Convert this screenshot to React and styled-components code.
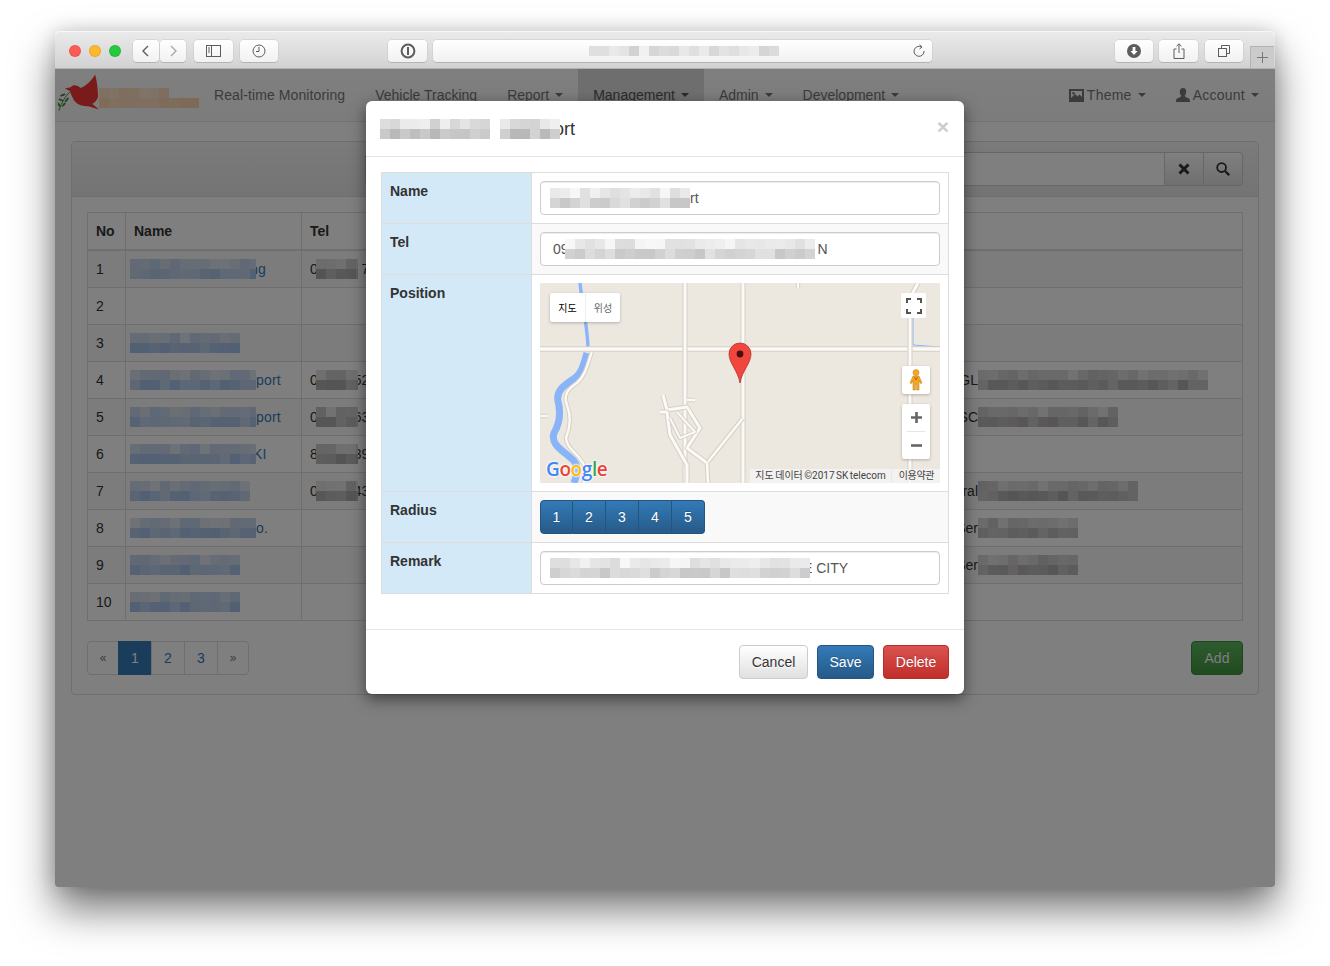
import styled, { createGlobalStyle } from "styled-components";

const GlobalStyle = createGlobalStyle`
  html, body {
    margin: 0;
    padding: 0;
    height: 100%;
    background: #fff;
    overflow: hidden;
  }
  body {
    font-family: "Liberation Sans", Arial, sans-serif;
    font-size: 14px;
    line-height: 20px;
    color: #333;
  }
  * { box-sizing: border-box; }
`;

const noise = (a, b) => {
  const x = Math.sin(a * 12.9898 + b * 78.233) * 43758.5453;
  return x - Math.floor(x);
};

const TONES = {
  gray: [[244, 244, 244], [180, 180, 180]],
  soft: [[250, 250, 250], [196, 196, 196]],
  blue: [[226, 230, 236], [160, 190, 232]],
  dark: [[232, 232, 232], [168, 164, 164]],
  peach: [[255, 236, 218], [255, 208, 166]],
};

// pixelated patch that hides a piece of text in the screenshot
const Mosaic = ({ cols, rows = 2, tone = "gray", seed = 1, first, ...rest }) => {
  const [light, dark] = TONES[tone];
  const cells = [];
  for (let r = 0; r < rows; r++) {
    const count = r === 0 && first ? first : cols;
    for (let c = 0; c < cols; c++) {
      const base = r === 0 ? 0.05 : 0.45;
      const t = base + noise(c + seed * 7, r + seed) * 0.5;
      const mix = light.map((v, i) => Math.round(v + (dark[i] - v) * t));
      cells.push(
        <MosaicCell
          key={`${r}-${c}`}
          style={{ background: c < count ? `rgb(${mix.join(",")})` : "transparent" }}
        />
      );
    }
  }
  return (
    <MosaicGrid $cols={cols} {...rest}>
      {cells}
    </MosaicGrid>
  );
};

const MosaicGrid = styled.span`
  display: inline-grid;
  grid-template-columns: repeat(${(p) => p.$cols}, 10px);
  grid-auto-rows: 10px;
  flex: none;
  position: relative;
  z-index: 1;
  overflow: hidden;
  ${(p) => p.$width && `width: ${p.$width}px;`}
  margin-left: ${(p) => p.$before || 0}px;
  margin-right: ${(p) => p.$after || 0}px;
`;

const MosaicCell = styled.span`
  display: block;
`;

/* ---------- browser chrome ---------- */

const Window = styled.div`
  width: 1220px;
  height: 856px;
  margin: 31px 0 0 55px;
  border-radius: 5px 5px 3px 3px;
  box-shadow: 0 22px 42px rgba(0, 0, 0, 0.55), 0 0 18px rgba(0, 0, 0, 0.16);
  display: flex;
  flex-direction: column;
  overflow: visible;
`;

const Toolbar = styled.div`
  height: 38px;
  flex: none;
  display: flex;
  align-items: flex-start;
  padding: 9px 0 0 14px;
  background: linear-gradient(#ebebeb, #d2d2d2);
  border-radius: 5px 5px 0 0;
  border-bottom: 1px solid #b1b1b1;
  box-shadow: inset 0 1px 0 #f7f7f7;
`;

const Light = styled.span`
  width: 12px;
  height: 12px;
  margin: 5px 8px 0 0;
  border-radius: 50%;
  background: ${(p) => p.$color};
  box-shadow: inset 0 0 0 1px rgba(0, 0, 0, 0.08);
`;

const ToolButton = styled.div`
  width: ${(p) => p.$w}px;
  height: 22px;
  margin-left: ${(p) => p.$gap || 0}px;
  display: flex;
  align-items: center;
  justify-content: center;
  flex: none;
  border-radius: 4px;
  background: linear-gradient(#ffffff, #f1f1f1);
  box-shadow: 0 1px 0 #b4b4b4, 0 0 0 0.5px #c8c8c8;
  color: ${(p) => (p.$off ? "#a8a8a8" : "#5c5c5c")};
`;

const UrlBar = styled(ToolButton)`
  padding-right: 6px;
  position: relative;
`;

const UrlReload = styled.span`
  position: absolute;
  right: 6px;
  top: 4px;
  display: flex;
`;

const NewTab = styled.div`
  width: 24px;
  height: 22px;
  margin: -1px 0 0 7px;
  align-self: flex-end;
  display: flex;
  align-items: center;
  justify-content: center;
  background: #cbcbcb;
  border: 1px solid #b4b4b4;
  border-right: 0;
  border-bottom: 0;
  color: #777;
`;

/* ---------- page behind the dialog ---------- */

const Page = styled.div`
  flex: 1;
  position: relative;
  background: #fff;
  border-radius: 0 0 3px 3px;
  overflow: hidden;
`;

const Navbar = styled.nav`
  height: 53px;
  display: flex;
  background: linear-gradient(#fff, #f8f8f8);
  border-bottom: 1px solid #e7e7e7;
`;

const Brand = styled.div`
  width: 141px;
  margin-left: 3px;
  display: flex;
  align-items: flex-start;
  padding-top: 4px;
  flex: none;
`;

const BrandPatch = styled.span`
  margin-top: 15px;
  display: inline-flex;
`;

const NavItem = styled.div`
  height: 52px;
  padding: 0 ${(p) => (p.$end ? 16 : 15)}px 0 15px;
  display: flex;
  align-items: center;
  color: #777;
  white-space: nowrap;
  letter-spacing: ${(p) => p.$track || 0}px;
  background: ${(p) => (p.$active ? "linear-gradient(#dbdbdb, #e2e2e2)" : "none")};
  margin-left: ${(p) => (p.$push ? "auto" : "0")};
  ${(p) => p.$active && "color: #555;"}
`;

const NavIcon = styled.span`
  display: inline-flex;
  margin-right: 3px;
  color: #777;
`;

const Caret = styled.span`
  width: 0;
  height: 0;
  margin-left: 6px;
  border-top: 4px solid currentColor;
  border-left: 4px solid transparent;
  border-right: 4px solid transparent;
`;

const Panel = styled.section`
  margin: 19px 16px 0;
  height: 554px;
  border: 1px solid #ddd;
  border-radius: 4px;
`;

const PanelHead = styled.div`
  height: 55px;
  padding: 10px 15px;
  display: flex;
  justify-content: flex-end;
  background: linear-gradient(#f5f5f5, #e8e8e8);
  border-bottom: 1px solid #ddd;
  border-radius: 3px 3px 0 0;
`;

const SearchInput = styled.div`
  width: 800px;
  height: 34px;
  background: #fff;
  border: 1px solid #ccc;
  border-radius: 4px 0 0 4px;
`;

const SearchButton = styled.div`
  width: ${(p) => p.$w}px;
  height: 34px;
  margin-left: -1px;
  display: flex;
  align-items: center;
  justify-content: center;
  background: linear-gradient(#fff, #e0e0e0);
  border: 1px solid #ccc;
  border-radius: ${(p) => (p.$last ? "0 4px 4px 0" : "0")};
  color: #333;
`;

const PanelBody = styled.div`
  padding: 15px;
`;

const ListTable = styled.table`
  width: 1155px;
  table-layout: fixed;
  border-collapse: collapse;
  border: 1px solid #ddd;

  th, td {
    border: 1px solid #ddd;
    padding: 8px;
    height: 37px;
    text-align: left;
    line-height: 20px;
    overflow: hidden;
  }
  th {
    border-bottom-width: 2px;
  }
  tbody tr:nth-child(odd) {
    background: #f9f9f9;
  }
`;

const CellLine = styled.div`
  display: flex;
  align-items: center;
  height: 20px;
  white-space: nowrap;
  color: ${(p) => (p.$link ? "#337ab7" : "#333")};
  ${(p) => p.$link && "letter-spacing: 0.2px;"}
`;

const Lead = styled.span`
  width: 22px;
  flex: none;
  text-align: right;
  overflow: hidden;
  direction: rtl;
`;

const ListFooter = styled.div`
  display: flex;
  justify-content: space-between;
  margin-top: 20px;
`;

const Pager = styled.div`
  display: flex;
  height: 34px;
`;

const PagerItem = styled.div`
  width: ${(p) => p.$w}px;
  margin-left: -1px;
  display: flex;
  align-items: center;
  justify-content: center;
  background: ${(p) => (p.$active ? "#337ab7" : "#fff")};
  color: ${(p) => (p.$active ? "#fff" : p.$muted ? "#777" : "#337ab7")};
  border: 1px solid ${(p) => (p.$active ? "#337ab7" : "#ddd")};
  font-size: ${(p) => (p.$muted ? 12 : 14)}px;
  &:first-child {
    margin-left: 0;
    border-radius: 4px 0 0 4px;
  }
  &:last-child {
    border-radius: 0 4px 4px 0;
  }
`;

const GRADIENTS = {
  default: ["#fff", "#e0e0e0", "#ccc", "#333"],
  primary: ["#337ab7", "#265a88", "#245580", "#fff"],
  success: ["#5cb85c", "#419641", "#3e8f3e", "#fff"],
  danger: ["#d9534f", "#c12e2a", "#b92c28", "#fff"],
};

const Button = styled.div`
  width: ${(p) => p.$w}px;
  height: 34px;
  margin-left: ${(p) => p.$gap || 0}px;
  display: flex;
  align-items: center;
  justify-content: center;
  border-radius: 4px;
  background: linear-gradient(${(p) => GRADIENTS[p.$kind][0]}, ${(p) => GRADIENTS[p.$kind][1]});
  border: 1px solid ${(p) => GRADIENTS[p.$kind][2]};
  color: ${(p) => GRADIENTS[p.$kind][3]};
  text-shadow: ${(p) => (p.$kind === "default" ? "0 1px 0 #fff" : "0 -1px 0 rgba(0,0,0,.2)")};
`;

/* ---------- dialog ---------- */

const Backdrop = styled.div`
  position: absolute;
  inset: 0;
  z-index: 5;
  background: rgba(0, 0, 0, 0.5);
  display: flex;
  justify-content: center;
  align-items: flex-start;
`;

const Modal = styled.div`
  width: 598px;
  height: 593px;
  margin-top: 32px;
  background: #fff;
  border-radius: 6px;
  box-shadow: 0 5px 15px rgba(0, 0, 0, 0.5);
  display: flex;
  flex-direction: column;
`;

const ModalHeader = styled.header`
  height: 56px;
  flex: none;
  padding: 0 15px 0 14px;
  display: flex;
  align-items: center;
  justify-content: space-between;
  border-bottom: 1px solid #e5e5e5;
`;

const ModalTitle = styled.h4`
  margin: 0;
  display: flex;
  align-items: center;
  font-size: 18px;
  font-weight: 400;
  line-height: 26px;
`;

const Close = styled.span`
  font-size: 21px;
  font-weight: 700;
  line-height: 1;
  color: #000;
  opacity: 0.2;
  margin: 0 0 4px 0;
`;

const ModalBody = styled.div`
  flex: 1;
  padding: 15px;
`;

const FormTable = styled.table`
  width: 568px;
  table-layout: fixed;
  border-collapse: collapse;
  border: 1px solid #ddd;

  th, td {
    border: 1px solid #ddd;
    padding: 8px;
    vertical-align: top;
  }
  th {
    width: 150px;
    text-align: left;
    font-weight: 700;
    background: #d4e9f7;
  }
`;

const Striped = styled.tr`
  td {
    background: #f9f9f9;
  }
`;

const Field = styled.div`
  width: 400px;
  height: 34px;
  display: flex;
  align-items: center;
  padding: 0 12px 0 9px;
  background: #fff;
  border: 1px solid #ccc;
  border-radius: 4px;
  color: #555;
  white-space: nowrap;
  box-shadow: inset 0 1px 1px rgba(0, 0, 0, 0.075);
`;

const FieldLead = styled.span`
  margin-left: 3px;
`;

const Map = styled.div`
  width: 400px;
  height: 200px;
  position: relative;
  overflow: hidden;
  background: #ece8e0;
  font-family: Roboto, "Noto Sans CJK KR", sans-serif;
`;

const MapCanvas = styled.svg`
  display: block;
`;

const MapTypes = styled.div`
  position: absolute;
  left: 10px;
  top: 10px;
  height: 29px;
  display: flex;
  background: #fff;
  border-radius: 2px;
  box-shadow: 0 1px 3px rgba(0, 0, 0, 0.25);
  font-family: "Noto Sans CJK KR", sans-serif;
  font-size: 10px;
`;

const MapType = styled.span`
  width: 35px;
  display: flex;
  align-items: center;
  justify-content: center;
  color: ${(p) => (p.$on ? "#000" : "#666")};
  ${(p) => !p.$on && "border-left: 1px solid #eee;"}
`;

const MapControl = styled.div`
  position: absolute;
  left: ${(p) => p.$x}px;
  top: ${(p) => p.$y}px;
  width: ${(p) => p.$w}px;
  height: ${(p) => p.$h}px;
  background: #fff;
  border-radius: 2px;
  box-shadow: ${(p) => (p.$flat ? "none" : "0 1px 3px rgba(0, 0, 0, 0.25)")};
  display: flex;
  flex-direction: column;
  align-items: center;
  justify-content: center;
`;

const ZoomStep = styled.span`
  flex: 1;
  width: 18px;
  display: flex;
  align-items: center;
  justify-content: center;
  ${(p) => p.$divided && "border-top: 1px solid #e6e6e6;"}
`;

const GoogleMark = styled.div`
  position: absolute;
  left: 6px;
  bottom: 2px;
  font-family: "Open Sans", sans-serif;
  font-size: 19px;
  line-height: 24px;
  letter-spacing: -0.4px;
  font-weight: 600;
  text-shadow: 0 0 2px #fff, 0 0 2px #fff, 0 0 3px #fff;
`;

const GoogleLetter = styled.span`
  color: ${(p) => p.$color};
`;

const Attribution = styled.div`
  position: absolute;
  right: 0;
  bottom: 0;
  height: 14px;
  display: flex;
  font-size: 10px;
  line-height: 14px;
  color: #444;
`;

const AttributionText = styled.span`
  padding: 0 5px 0 5px;
  background: rgba(245, 245, 245, 0.72);
  white-space: nowrap;
  word-spacing: -1px;
`;

const AttributionTerms = styled(AttributionText)`
  margin-left: 1px;
  padding: 0 6px 0 7px;
  letter-spacing: -0.4px;
`;

const RadiusGroup = styled.div`
  display: inline-flex;
  height: 34px;
`;

const RadiusButton = styled.div`
  width: 33px;
  display: flex;
  align-items: center;
  justify-content: center;
  color: #fff;
  background: linear-gradient(#337ab7, #265a88);
  border: 1px solid #245580;
  border-left-width: 0;
  text-shadow: 0 -1px 0 rgba(0, 0, 0, 0.2);
  &:first-child {
    border-left-width: 1px;
    border-radius: 4px 0 0 4px;
  }
  &:last-child {
    border-radius: 0 4px 4px 0;
  }
`;

const ModalFooter = styled.footer`
  height: 65px;
  flex: none;
  padding: 15px;
  display: flex;
  justify-content: flex-end;
  border-top: 1px solid #e5e5e5;
`;

/* ---------- drawings ---------- */

const Stroke = ({ w = 14, h = 14, vb = "0 0 14 14", sw = 1.2, children }) => (
  <svg width={w} height={h} viewBox={vb} fill="none" stroke="currentColor" strokeWidth={sw}>
    {children}
  </svg>
);

const Dove = () => (
  <svg width="42" height="40" viewBox="0 0 42 40">
    <path
      d="M38 1 C40 8 41 17 41 24 C40 28 37 30 35 31 L42 37 L31 33.5 C25 34 19 32 16 27 C14 23 13 20 12 18 L7 15.5 L13 14 C16 11 20 12 23 15 C28 13 34 8 38 1 Z"
      fill="#f43636"
    />
    <path d="M12 19 C8 23 4 29 1 38" fill="none" stroke="#3f8a3a" strokeWidth="1" />
    <g fill="#3f8a3a">
      <ellipse cx="5" cy="22" rx="3" ry="1.1" transform="rotate(-20 5 22)" />
      <ellipse cx="9" cy="27" rx="3" ry="1.1" transform="rotate(-50 9 27)" />
      <ellipse cx="3" cy="27" rx="2.6" ry="1" transform="rotate(20 3 27)" />
      <ellipse cx="6" cy="32" rx="2.6" ry="1" transform="rotate(-50 6 32)" />
      <ellipse cx="1" cy="32" rx="2.4" ry="1" transform="rotate(60 1 32)" />
    </g>
  </svg>
);

const Road = ({ d, w = 3 }) => (
  <>
    <path d={d} fill="none" stroke="#d6d0c3" strokeWidth={w + 2} strokeLinejoin="round" />
    <path d={d} fill="none" stroke="#fbfaf8" strokeWidth={w} strokeLinejoin="round" />
  </>
);

const MapDrawing = () => (
  <MapCanvas width="400" height="200" viewBox="0 0 400 200">
    <path d="M40 0 C42 20 47 40 48 64" fill="none" stroke="#8ab4f8" strokeWidth="3.4" />
    <path
      d="M47 70 C44 80 42 90 35 95 C24 102 16 108 18 118 C21 130 20 140 14 150 C10 162 24 168 34 178 C40 186 36 194 34 200"
      fill="none"
      stroke="#8ab4f8"
      strokeWidth="7"
    />
    <path d="M378 0 L373 12 L373 62 L400 64" fill="none" stroke="#8ab4f8" strokeWidth="1" />
    <Road d="M52 68 C47 84 45 93 37 100 C28 106 23 112 27 122 C32 135 30 145 26 155 C26 165 38 170 44 182 L44 200" w={2.4} />
    <Road d="M0 66 H400" w={3.6} />
    <Road d="M145 0 V200" w={3} />
    <Road d="M203 0 V200" w={3} />
    <Road d="M378 0 L370 15 V200" w={3} />
    <Road d="M203 135 L167 180 L168 200" w={2.6} />
    <Road d="M123 112 L127 127 L147 124 L160 145 L147 165 L167 180" w={3} />
    <Road d="M120 129 H127 L130 152 L147 182 V200" w={3} />
    <Road d="M137 129 L155 149 L140 155 L130 135" w={2} />
    <Road d="M147 117 H155" w={2.4} />
    <Road d="M258 0 V5" w={2.4} />
    <Road d="M0 133 H7" w={2.4} />
    <path
      d="M200 100 C198 88 189 80 189 71 A11 11 0 1 1 211 71 C211 80 202 88 200 100 Z"
      fill="#f0463e"
      stroke="#b8322a"
      strokeWidth="0.8"
    />
    <circle cx="200" cy="71" r="3.4" fill="#4a0f0c" />
  </MapCanvas>
);

const Pegman = () => (
  <svg width="14" height="22" viewBox="0 0 14 22">
    <circle cx="7" cy="3.6" r="3" fill="#f7a823" stroke="#b9791a" strokeWidth="0.5" />
    <path
      d="M4 7 H10 L13 14 L11.4 14.6 L10 11 V21 H7.6 V15 H6.4 V21 H4 V11 L2.6 14.6 L1 14 Z"
      fill="#f7a823"
      stroke="#b9791a"
      strokeWidth="0.5"
    />
    <path d="M5.5 8 L7 11 L8.5 8" fill="none" stroke="#c43d1c" strokeWidth="0.8" />
  </svg>
);

const NAV = [
  { label: "Real-time Monitoring", track: 0.1 },
  { label: "Vehicle Tracking" },
  { label: "Report", caret: true },
  { label: "Management", caret: true, active: true },
  { label: "Admin", caret: true },
  { label: "Development", caret: true },
];

const ROWS = [
  { name: { cols: 13, text: "ng", after: -6 }, tel: ["0", "\u00a0\u00a07"] },
  {},
  { name: { cols: 11, width: 110 } },
  { name: { cols: 13, text: "port" }, tel: ["0", "52"], addr: { lead: "GL", cols: 23 } },
  { name: { cols: 13, text: "port" }, tel: ["0", "63"], addr: { lead: "SC", cols: 14 } },
  { name: { cols: 13, text: "KI", after: -3 }, tel: ["8", "39"] },
  { name: { cols: 12, width: 120 }, tel: ["0", "43"], addr: { lead: "ral", cols: 16 } },
  { name: { cols: 13, text: "o." }, addr: { lead: "Ser", cols: 10 } },
  { name: { cols: 11, width: 110 }, addr: { lead: "Ser", cols: 10 } },
  { name: { cols: 11, width: 110 } },
];

const App = () => {
  return (
    <>
      <GlobalStyle />
      <Window>
        <Toolbar>
          <Light $color="#fc5b57" />
          <Light $color="#fdb82c" />
          <Light $color="#27c93f" />
          <ToolButton $w={26} $gap={4}>
            <Stroke sw={1.4}><path d="M9 2 L4 7 L9 12" /></Stroke>
          </ToolButton>
          <ToolButton $w={26} $gap={1} $off>
            <Stroke sw={1.4}><path d="M5 2 L10 7 L5 12" /></Stroke>
          </ToolButton>
          <ToolButton $w={39} $gap={8}>
            <Stroke w={15} h={12} vb="0 0 15 12" sw={1}>
              <rect x="0.5" y="0.5" width="14" height="11" />
              <path d="M5.5 0.5 V11.5 M2 3 H4 M2 5 H4 M2 7 H4" />
            </Stroke>
          </ToolButton>
          <ToolButton $w={38} $gap={7}>
            <Stroke sw={1}>
              <circle cx="7" cy="7" r="6" />
              <path d="M7 3 V7.5 H4" />
            </Stroke>
          </ToolButton>
          <ToolButton $w={39} $gap={110}>
            <Stroke w={16} h={16} vb="0 0 16 16" sw={2}>
              <circle cx="8" cy="8" r="6.4" />
              <path d="M8 4 V12" />
            </Stroke>
          </ToolButton>
          <UrlBar $w={499} $gap={6}>
            <Mosaic cols={19} rows={1} tone="gray" seed={4} $before={9} />
            <UrlReload>
              <Stroke sw={1}>
                <path d="M9.5 3 A5 5 0 1 0 12 7" />
                <path d="M7.5 0.8 L10 3 L7.5 5" />
              </Stroke>
            </UrlReload>
          </UrlBar>
          <ToolButton $w={38} $gap={183}>
            <svg width="14" height="14" viewBox="0 0 14 14">
              <circle cx="7" cy="7" r="7" fill="#5c5c5c" />
              <path d="M5.6 3 H8.4 V7 H10.6 L7 11 L3.4 7 H5.6 Z" fill="#fff" />
            </svg>
          </ToolButton>
          <ToolButton $w={39} $gap={6}>
            <Stroke w={12} h={16} vb="0 0 12 16" sw={1}>
              <path d="M3.5 6 H1 V15.5 H11 V6 H8.5 M6 10 V1 M3.5 3.2 L6 0.8 L8.5 3.2" />
            </Stroke>
          </ToolButton>
          <ToolButton $w={38} $gap={7}>
            <Stroke w={12} h={12} vb="0 0 12 12" sw={1}>
              <rect x="0.5" y="3.5" width="8" height="8" />
              <path d="M3.5 3.5 V0.5 H11.5 V8.5 H8.5" />
            </Stroke>
          </ToolButton>
          <NewTab>
            <Stroke w={11} h={11} vb="0 0 11 11" sw={1}>
              <path d="M5.5 0 V11 M0 5.5 H11" />
            </Stroke>
          </NewTab>
        </Toolbar>

        <Page>
          <Navbar>
            <Brand>
              <Dove />
              <BrandPatch>
                <Mosaic cols={10} rows={2} tone="peach" seed={6} first={7} />
              </BrandPatch>
            </Brand>
            {NAV.map((item) => (
              <NavItem key={item.label} $active={item.active} $track={item.track}>
                {item.label}
                {item.caret && <Caret />}
              </NavItem>
            ))}
            <NavItem $push $track={0.25}>
              <NavIcon>
                <svg width="15" height="13" viewBox="0 0 15 13">
                  <path
                    fillRule="evenodd"
                    d="M0 0 H15 V13 H0 Z M2 2 V9 L6 5 L8.5 7.5 L10.5 5.5 L13 8 V2 Z M4.5 3 A1.3 1.3 0 1 0 4.5 5.6 A1.3 1.3 0 1 0 4.5 3 Z"
                    fill="currentColor"
                  />
                </svg>
              </NavIcon>
              Theme
              <Caret />
            </NavItem>
            <NavItem $end $track={0.25}>
              <NavIcon>
                <svg width="14" height="14" viewBox="0 0 14 14">
                  <path
                    d="M7 0 C9.2 0 10.2 1.6 10.2 3.8 C10.2 5.6 9.4 7 8.8 7.8 C8.8 9 10 9.3 12 10 C13.6 10.6 14 11.6 14 14 H0 C0 11.6 0.4 10.6 2 10 C4 9.3 5.2 9 5.2 7.8 C4.6 7 3.8 5.6 3.8 3.8 C3.8 1.6 4.8 0 7 0 Z"
                    fill="currentColor"
                  />
                </svg>
              </NavIcon>
              Account
              <Caret />
            </NavItem>
          </Navbar>

          <Panel>
            <PanelHead>
              <SearchInput />
              <SearchButton $w={40}>
                <Stroke sw={3}><path d="M2.5 2.5 L11.5 11.5 M11.5 2.5 L2.5 11.5" /></Stroke>
              </SearchButton>
              <SearchButton $w={40} $last>
                <Stroke sw={1.8}>
                  <circle cx="5.6" cy="5.6" r="4.4" />
                  <path d="M9 9 L13.2 13.2" strokeWidth="2.4" />
                </Stroke>
              </SearchButton>
            </PanelHead>
            <PanelBody>
              <ListTable>
                <colgroup>
                  <col width="38" />
                  <col width="176" />
                  <col width="299" />
                  <col width="347" />
                  <col width="295" />
                </colgroup>
                <thead>
                  <tr>
                    <th>No</th>
                    <th>Name</th>
                    <th>Tel</th>
                    <th />
                    <th />
                  </tr>
                </thead>
                <tbody>
                  {ROWS.map((row, i) => (
                    <tr key={i}>
                      <td>{i + 1}</td>
                      <td>
                        {row.name && (
                          <CellLine $link>
                            <Mosaic
                              cols={row.name.cols}
                              tone="blue"
                              seed={i + 2}
                              $width={row.name.width || 126}
                              $before={-4}
                              $after={row.name.after}
                            />
                            {row.name.text}
                          </CellLine>
                        )}
                      </td>
                      <td>
                        {row.tel && (
                          <CellLine>
                            {row.tel[0]}
                            <Mosaic cols={5} tone="dark" seed={i + 11} $width={42} $before={-2} $after={-4} />
                            {row.tel[1]}
                          </CellLine>
                        )}
                      </td>
                      <td />
                      <td>
                        {row.addr && (
                          <CellLine>
                            <Lead>{row.addr.lead}</Lead>
                            <Mosaic cols={row.addr.cols} tone="dark" seed={i + 21} />
                          </CellLine>
                        )}
                      </td>
                    </tr>
                  ))}
                </tbody>
              </ListTable>
              <ListFooter>
                <Pager>
                  <PagerItem $w={32} $muted>«</PagerItem>
                  <PagerItem $w={34} $active>1</PagerItem>
                  <PagerItem $w={34}>2</PagerItem>
                  <PagerItem $w={34}>3</PagerItem>
                  <PagerItem $w={32} $muted>»</PagerItem>
                </Pager>
                <Button $kind="success" $w={52}>Add</Button>
              </ListFooter>
            </PanelBody>
          </Panel>

          <Backdrop>
            <Modal>
              <ModalHeader>
                <ModalTitle>
                  <Mosaic cols={11} tone="gray" seed={3} />
                  <Mosaic cols={6} tone="gray" seed={5} $before={10} $after={-6} />
                  ort
                </ModalTitle>
                <Close>×</Close>
              </ModalHeader>
              <ModalBody>
                <FormTable>
                  <tbody>
                    <tr>
                      <th>Name</th>
                      <td>
                        <Field>
                          <Mosaic cols={14} tone="soft" seed={8} />
                          rt
                        </Field>
                      </td>
                    </tr>
                    <Striped>
                      <th>Tel</th>
                      <td>
                        <Field>
                          <FieldLead>09</FieldLead>
                          <Mosaic cols={25} tone="soft" seed={9} $before={-4} $after={3} />
                          N
                        </Field>
                      </td>
                    </Striped>
                    <tr>
                      <th>Position</th>
                      <td>
                        <Map>
                          <MapDrawing />
                          <MapTypes>
                            <MapType $on>지도</MapType>
                            <MapType>위성</MapType>
                          </MapTypes>
                          <MapControl $x={361} $y={10} $w={25} $h={25} $flat>
                            <svg width="16" height="16" viewBox="0 0 16 16" fill="none" stroke="#555" strokeWidth="2">
                              <path d="M1 5 V1 H5 M11 1 H15 V5 M15 11 V15 H11 M5 15 H1 V11" />
                            </svg>
                          </MapControl>
                          <MapControl $x={362} $y={83} $w={28} $h={28}>
                            <Pegman />
                          </MapControl>
                          <MapControl $x={362} $y={121} $w={28} $h={55}>
                            <ZoomStep>
                              <svg width="11" height="11" viewBox="0 0 11 11" fill="none" stroke="#666" strokeWidth="2.6">
                                <path d="M5.5 0 V11 M0 5.5 H11" />
                              </svg>
                            </ZoomStep>
                            <ZoomStep $divided>
                              <svg width="11" height="3" viewBox="0 0 11 3" fill="none" stroke="#666" strokeWidth="2.6">
                                <path d="M0 1.5 H11" />
                              </svg>
                            </ZoomStep>
                          </MapControl>
                          <GoogleMark>
                            <GoogleLetter $color="#4285f4">G</GoogleLetter>
                            <GoogleLetter $color="#ea4335">o</GoogleLetter>
                            <GoogleLetter $color="#fbbc05">o</GoogleLetter>
                            <GoogleLetter $color="#4285f4">g</GoogleLetter>
                            <GoogleLetter $color="#34a853">l</GoogleLetter>
                            <GoogleLetter $color="#ea4335">e</GoogleLetter>
                          </GoogleMark>
                          <Attribution>
                            <AttributionText>지도 데이터 ©2017 SK telecom</AttributionText>
                            <AttributionTerms>이용약관</AttributionTerms>
                          </Attribution>
                        </Map>
                      </td>
                    </tr>
                    <Striped>
                      <th>Radius</th>
                      <td>
                        <RadiusGroup>
                          {[1, 2, 3, 4, 5].map((n) => (
                            <RadiusButton key={n}>{n}</RadiusButton>
                          ))}
                        </RadiusGroup>
                      </td>
                    </Striped>
                    <tr>
                      <th>Remark</th>
                      <td>
                        <Field>
                          <Mosaic cols={26} tone="soft" seed={10} $after={-7} />
                          E CITY
                        </Field>
                      </td>
                    </tr>
                  </tbody>
                </FormTable>
              </ModalBody>
              <ModalFooter>
                <Button $kind="default" $w={69}>Cancel</Button>
                <Button $kind="primary" $w={57} $gap={9}>Save</Button>
                <Button $kind="danger" $w={66} $gap={9}>Delete</Button>
              </ModalFooter>
            </Modal>
          </Backdrop>
        </Page>
      </Window>
    </>
  );
};

export default App;
